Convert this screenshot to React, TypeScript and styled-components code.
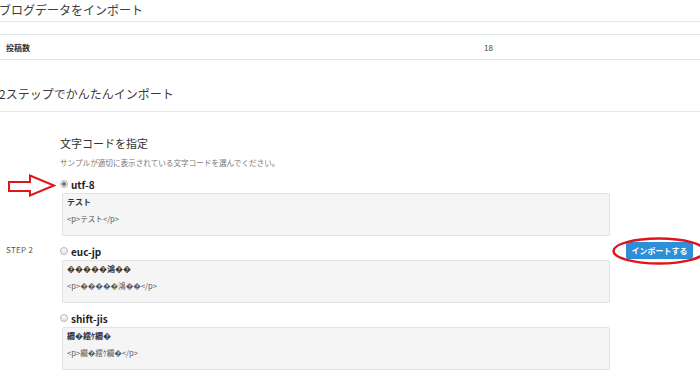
import styled, { createGlobalStyle } from "styled-components";

const GlobalStyle = createGlobalStyle`
  html, body {
    margin: 0;
    padding: 0;
    background: #fff;
  }
  body {
    font-family: "Noto Sans CJK JP", "Noto Sans", sans-serif;
    color: #333;
    overflow: hidden;
  }
`;

interface OptionData {
  id: string;
  label: string;
  checked?: boolean;
  title: string;
  code: string;
}

const options: OptionData[] = [
  { id: "utf8", label: "utf-8", checked: true, title: "テスト", code: "<p>テスト</p>" },
  { id: "eucjp", label: "euc-jp", title: "�����鴻��", code: "<p>�����鴻��</p>" },
  { id: "sjis", label: "shift-jis", title: "繝�繧ｹ繝�", code: "<p>繝�繧ｹ繝�</p>" },
];

export default function App() {
  return (
    <Page>
      <GlobalStyle />
      <SectionTitle>ブログデータをインポート</SectionTitle>
      <InfoTable>
        <InfoRow>
          <InfoLabel>投稿数</InfoLabel>
          <InfoValue>18</InfoValue>
        </InfoRow>
      </InfoTable>
      <SectionTitle $gap={27}>2ステップでかんたんインポート</SectionTitle>

      <StepGrid>
        <StepLabel>STEP 2</StepLabel>
        <StepBody>
          <StepHeading>文字コードを指定</StepHeading>
          <StepHint>サンプルが適切に表示されている文字コードを選んでください。</StepHint>
          {options.map((o) => (
            <Option key={o.id}>
              <RadioRow>
                {o.checked && (
                  <Arrow width="48" height="23" viewBox="0 0 48 23">
                    <polygon
                      points="1,8 22,8 22,1.5 46,11.5 22,21.5 22,17 1,17"
                      fill="#fff"
                      stroke="#e2141b"
                      strokeWidth="2"
                      strokeLinejoin="miter"
                    />
                  </Arrow>
                )}
                <Radio $checked={!!o.checked} />
                <RadioLabel>{o.label}</RadioLabel>
              </RadioRow>
              <SampleBox>
                <SampleTitle>{o.title}</SampleTitle>
                <SampleCode>{o.code}</SampleCode>
              </SampleBox>
            </Option>
          ))}
        </StepBody>
        <ActionCell>
          <ImportButton>
            インポートする
            <Circle width="94" height="28" viewBox="0 0 94 28">
              <ellipse cx="47" cy="14" rx="45.5" ry="12.5" fill="none" stroke="#e2141b" strokeWidth="2.5" />
            </Circle>
          </ImportButton>
        </ActionCell>
      </StepGrid>
    </Page>
  );
}

const Page = styled.div`
  width: 700px;
  height: 385px;
  overflow: hidden;
`;

const SectionTitle = styled.h2<{ $gap?: number }>`
  margin: 0 0 0 -1px;
  padding: ${(p) => p.$gap ?? 3}px 0 ${(p) => (p.$gap ? 10 : 4)}px;
  font-size: 12px;
  line-height: 14px;
  font-weight: 400;
  color: #3c3c3c;
  border-bottom: 1px solid #e8e8e8;
`;

const InfoTable = styled.div`
  margin-top: 12px;
  border-top: 1px solid #dfe6e6;
  border-bottom: 1px solid #dfe6e6;
`;

const InfoRow = styled.div`
  display: grid;
  grid-template-columns: 484px 1fr;
  align-items: center;
  height: 24px;
  font-size: 8px;
`;

const InfoLabel = styled.div`
  padding-left: 6px;
  font-weight: 700;
`;

const InfoValue = styled.div`
  color: #444;
`;

const StepGrid = styled.div`
  display: grid;
  grid-template-columns: 60px 550px 1fr;
  align-items: center;
`;

const StepLabel = styled.div`
  padding: 16px 0 0 6px;
  font-size: 8px;
  color: #555;
  letter-spacing: 0.3px;
`;

const StepBody = styled.div`
  padding-top: 24px;
`;

const StepHeading = styled.div`
  font-size: 11px;
  line-height: 14px;
  color: #333;
`;

const StepHint = styled.div`
  margin-top: 7px;
  font-size: 7.6px;
  line-height: 12px;
  color: #777;
`;

const Option = styled.div`
  margin-top: 8px;
`;

const RadioRow = styled.div`
  position: relative;
  display: flex;
  align-items: center;
  gap: 3px;
  height: 14px;
`;

const Arrow = styled.svg`
  position: absolute;
  left: -52px;
  top: -3px;
`;

const Radio = styled.span<{ $checked: boolean }>`
  box-sizing: border-box;
  width: 8px;
  height: 8px;
  border-radius: 50%;
  border: 1px solid #b5b5b5;
  background: ${(p) =>
    p.$checked
      ? "radial-gradient(circle, #777 0, #777 1.6px, #eee 2.2px)"
      : "linear-gradient(#fafafa, #e6e6e6)"};
`;

const RadioLabel = styled.span`
  font-size: 10px;
  font-weight: 700;
  color: #222;
`;

const SampleBox = styled.div`
  box-sizing: border-box;
  margin: 2px 0 0 2px;
  width: 548px;
  height: 43px;
  padding: 2px 4px 0;
  background: #f5f5f5;
  border: 1px solid #e2e2e2;
  border-radius: 2px;
`;

const SampleTitle = styled.div`
  font-size: 8px;
  line-height: 12px;
  font-weight: 700;
  color: #333;
`;

const SampleCode = styled.div`
  margin-top: 5px;
  font-size: 7.6px;
  line-height: 12px;
  color: #555;
`;

const ActionCell = styled.div`
  padding-left: 16px;
  padding-top: 12px;
`;

const ImportButton = styled.button`
  position: relative;
  width: 67px;
  height: 17px;
  padding: 0;
  border: none;
  border-radius: 2px;
  background: #2d8fd7;
  color: #fff;
  font-family: "Noto Sans CJK JP", sans-serif;
  font-size: 8px;
  font-weight: 700;
  cursor: pointer;
`;

const Circle = styled.svg`
  position: absolute;
  left: -14px;
  top: -5px;
  pointer-events: none;
`;
